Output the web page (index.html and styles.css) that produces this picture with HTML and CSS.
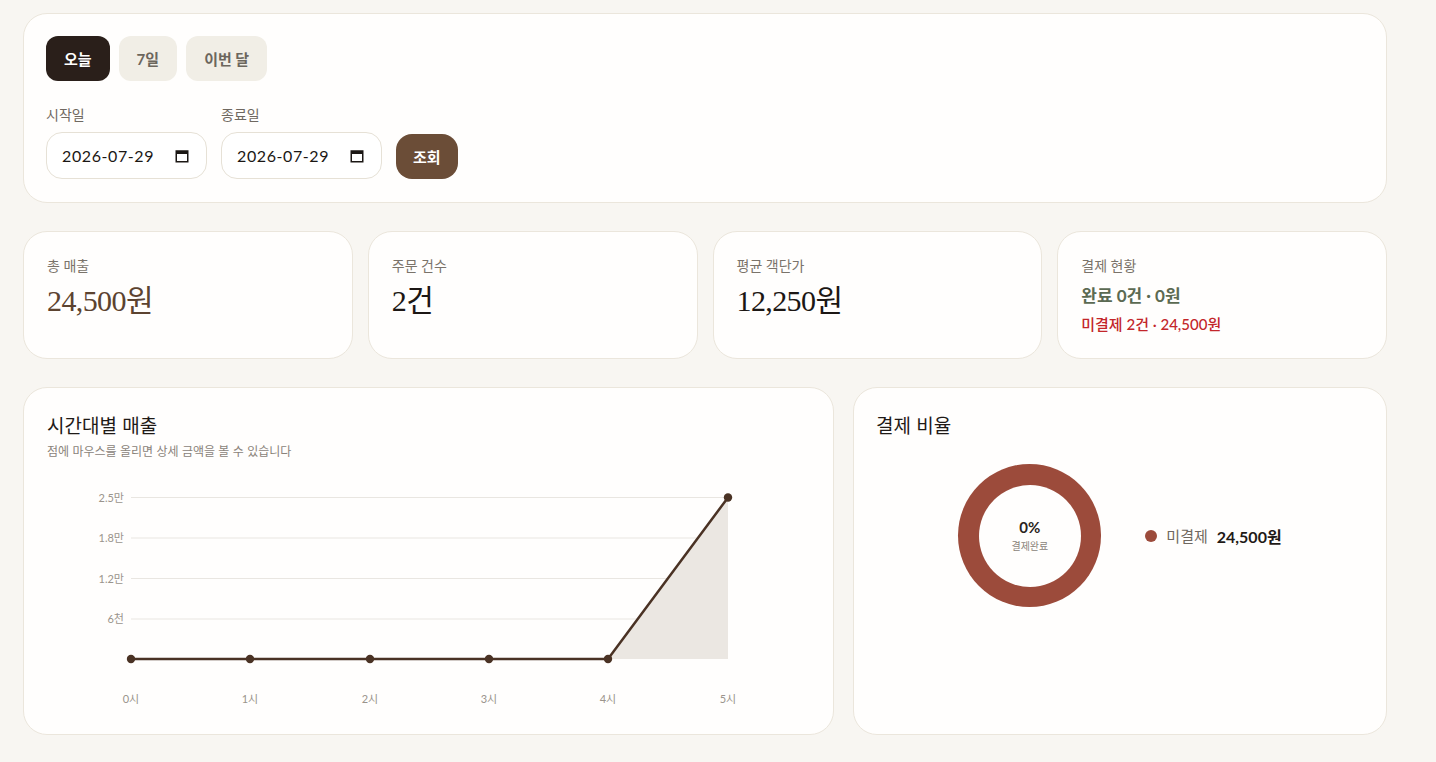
FILE: index.html
```html
<!DOCTYPE html>
<html lang="ko">
<head>
<meta charset="utf-8">
<title>매출 현황</title>
<link rel="stylesheet" href="styles.css">
</head>
<body>
<main class="page">
  <section class="card filter">
    <div class="quick">
      <button class="chip active">오늘</button>
      <button class="chip">7일</button>
      <button class="chip">이번 달</button>
    </div>
    <div class="range">
      <div class="field">
        <span class="field-label">시작일</span>
        <div class="date">
          <span class="date-text">2026-07-29</span>
          <svg class="cal" viewBox="0 0 14 14" width="14" height="14"><rect x="1.25" y="2" width="11.5" height="10.75" fill="none" stroke="#1b1714" stroke-width="1.5"/><rect x="1.25" y="2" width="11.5" height="3" fill="#1b1714"/></svg>
        </div>
      </div>
      <div class="field">
        <span class="field-label">종료일</span>
        <div class="date">
          <span class="date-text">2026-07-29</span>
          <svg class="cal" viewBox="0 0 14 14" width="14" height="14"><rect x="1.25" y="2" width="11.5" height="10.75" fill="none" stroke="#1b1714" stroke-width="1.5"/><rect x="1.25" y="2" width="11.5" height="3" fill="#1b1714"/></svg>
        </div>
      </div>
      <button class="search">조회</button>
    </div>
  </section>

  <section class="stats">
    <div class="card stat">
      <div class="stat-label">총 매출</div>
      <div class="stat-value brown">24,500원</div>
    </div>
    <div class="card stat">
      <div class="stat-label">주문 건수</div>
      <div class="stat-value">2건</div>
    </div>
    <div class="card stat">
      <div class="stat-label">평균 객단가</div>
      <div class="stat-value">12,250원</div>
    </div>
    <div class="card stat">
      <div class="stat-label">결제 현황</div>
      <div class="paid">완료 0건 · 0원</div>
      <div class="unpaid">미결제 2건 · 24,500원</div>
    </div>
  </section>

  <section class="charts">
    <div class="card chart-card">
      <h2 class="card-title">시간대별 매출</h2>
      <p class="card-sub">점에 마우스를 올리면 상세 금액을 볼 수 있습니다</p>
      <svg class="line-chart" viewBox="0 0 765 240" width="765" height="240">
        <g stroke="#e9e6e1" stroke-width="1">
          <line x1="84" y1="27.5" x2="681" y2="27.5"/>
          <line x1="84" y1="68" x2="681" y2="68"/>
          <line x1="84" y1="108.5" x2="681" y2="108.5"/>
          <line x1="84" y1="149" x2="681" y2="149"/>
        </g>
        <g class="axis" text-anchor="end">
          <text x="77" y="31.5">2.5만</text>
          <text x="77" y="72">1.8만</text>
          <text x="77" y="112.5">1.2만</text>
          <text x="77" y="153">6천</text>
        </g>
        <polygon points="561,189 681,27.5 681,189" fill="#ebe7e2"/>
        <polyline points="84,189 203,189 323,189 442,189 561,189 681,27.5" fill="none" stroke="#4a3224" stroke-width="2.5" stroke-linejoin="round"/>
        <g fill="#4a3224">
          <circle cx="84" cy="189" r="4.2"/>
          <circle cx="203" cy="189" r="4.2"/>
          <circle cx="323" cy="189" r="4.2"/>
          <circle cx="442" cy="189" r="4.2"/>
          <circle cx="561" cy="189" r="4.2"/>
          <circle cx="681" cy="27.5" r="4.2"/>
        </g>
        <g class="axis" text-anchor="middle">
          <text x="84" y="233">0시</text>
          <text x="203" y="233">1시</text>
          <text x="323" y="233">2시</text>
          <text x="442" y="233">3시</text>
          <text x="561" y="233">4시</text>
          <text x="681" y="233">5시</text>
        </g>
      </svg>
    </div>
    <div class="card pie-card">
      <h2 class="card-title">결제 비율</h2>
      <div class="pie-body">
        <div class="donut">
          <div class="donut-hole">
            <span class="pct">0%</span>
            <span class="pct-label">결제완료</span>
          </div>
        </div>
        <div class="legend">
          <span class="dot"></span>
          <span class="legend-name">미결제</span>
          <span class="legend-value">24,500원</span>
        </div>
      </div>
    </div>
  </section>
</main>
</body>
</html>
```

FILE: styles.css
```css
* { box-sizing: border-box; }

html, body {
  margin: 0;
  background: #f8f6f2;
}

body {
  font-family: Lato, "Noto Sans CJK KR", sans-serif;
  color: #1f1a17;
}

.page {
  width: 1364px;
  margin-left: 23px;
  padding-top: 13px;
  display: flex;
  flex-direction: column;
  gap: 28px;
}

.card {
  background: #fffefd;
  border: 1px solid #ebe6dc;
  border-radius: 24px;
}

/* filter */
.filter {
  padding: 22px 22px 23px;
  display: flex;
  flex-direction: column;
  gap: 24px;
}

.quick {
  display: flex;
  gap: 9px;
}

.chip {
  height: 45px;
  padding: 0 18px;
  border: none;
  border-radius: 12px;
  background: #f1eee6;
  color: #6c665d;
  font-family: Lato, "Noto Sans CJK KR", sans-serif;
  font-size: 15px;
  font-weight: 700;
}

.chip.active {
  background: #2a1f1a;
  color: #ffffff;
}

.range {
  display: flex;
  align-items: flex-end;
  gap: 14px;
}

.field {
  display: flex;
  flex-direction: column;
  gap: 7px;
}

.field-label {
  font-size: 14px;
  line-height: 20px;
  color: #6f6860;
}

.date {
  width: 161px;
  height: 47px;
  border: 1px solid #e6e1d6;
  border-radius: 16px;
  background: #ffffff;
  display: flex;
  align-items: center;
  justify-content: space-between;
  padding: 0 17px 0 15px;
}

.date-text {
  font-size: 16px;
  letter-spacing: 0.6px;
  color: #1b1714;
}

.cal { display: block; }

.search {
  height: 45px;
  padding: 0 17px;
  border: none;
  border-radius: 16px;
  background: #6b4d37;
  color: #ffffff;
  font-family: Lato, "Noto Sans CJK KR", sans-serif;
  font-size: 15px;
  font-weight: 700;
}

/* stats */
.stats {
  display: grid;
  grid-template-columns: repeat(4, 1fr);
  gap: 15px;
}

.stat {
  height: 128px;
  padding: 24px 23px;
  display: flex;
  flex-direction: column;
}

.stat-label {
  font-size: 14px;
  line-height: 20px;
  color: #7a736a;
}

.stat-value {
  margin-top: 5px;
  font-family: "Liberation Serif", "Noto Sans CJK KR", serif;
  font-size: 30px;
  line-height: 40px;
  letter-spacing: -0.6px;
  color: #1c1714;
}

.stat-value.brown { color: #5c4330; }

.paid {
  margin-top: 7px;
  font-size: 17px;
  line-height: 26px;
  font-weight: 700;
  color: #5b6a52;
}

.unpaid {
  margin-top: 4px;
  font-size: 15px;
  line-height: 22px;
  font-weight: 500;
  color: #c3262a;
}

/* charts */
.charts {
  display: grid;
  grid-template-columns: 811px 534px;
  gap: 19px;
}

.card-title {
  margin: 0;
  font-family: "Noto Sans CJK KR", sans-serif;
  font-size: 19px;
  font-weight: 400;
  line-height: 27px;
  color: #1f1a17;
}

.chart-card {
  padding: 23px 23px 24px;
}

.card-sub {
  margin: 4px 0 0;
  font-family: "Noto Sans CJK KR", sans-serif;
  font-size: 12px;
  line-height: 18px;
  color: #8a837a;
}

.line-chart {
  display: block;
  margin-top: 10px;
}

.axis text {
  font-family: Lato, "Noto Sans CJK KR", sans-serif;
  font-size: 11px;
  fill: #9a948c;
}

.pie-card {
  padding: 23px 22px;
}

.pie-body {
  margin-top: 26px;
  display: flex;
  align-items: center;
  justify-content: center;
  gap: 44px;
}

.donut {
  width: 143px;
  height: 143px;
  border-radius: 50%;
  background: #9c4b3b;
  display: flex;
  align-items: center;
  justify-content: center;
}

.donut-hole {
  width: 102px;
  height: 102px;
  border-radius: 50%;
  background: #fffefd;
  display: flex;
  flex-direction: column;
  align-items: center;
  justify-content: center;
  gap: 3px;
}

.pct {
  font-size: 15px;
  font-weight: 700;
  line-height: 18px;
  color: #2a2420;
}

.pct-label {
  font-family: "Noto Sans CJK KR", sans-serif;
  font-size: 10px;
  line-height: 14px;
  color: #8a837a;
}

.legend {
  display: flex;
  align-items: center;
}

.dot {
  width: 12px;
  height: 12px;
  border-radius: 50%;
  background: #9c4b3b;
  margin-right: 9px;
}

.legend-name {
  font-size: 15px;
  color: #6f6860;
  margin-right: 9px;
}

.legend-value {
  font-size: 16px;
  font-weight: 700;
  color: #1f1a17;
}
```
